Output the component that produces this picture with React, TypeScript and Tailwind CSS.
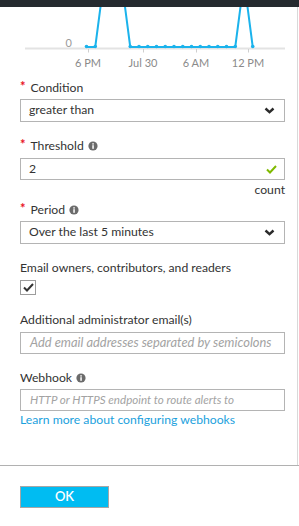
import React from "react";

const FONT = { fontFamily: '"Lato", "Open Sans", sans-serif' };

function Chevron() {
  return (
    <svg width="11" height="7" viewBox="0 0 11 7" className="shrink-0">
      <path d="M1.5 1.5 L5.5 5.2 L9.5 1.5" fill="none" stroke="#2b2b2b" strokeWidth="2.4" />
    </svg>
  );
}

function Info() {
  return (
    <svg width="10" height="10" viewBox="0 0 10 10" className="ml-[4px]">
      <circle cx="5" cy="5" r="4.6" fill="#6b6b6b" />
      <rect x="4.3" y="4.2" width="1.5" height="3.6" fill="#fff" />
      <rect x="4.3" y="2.2" width="1.5" height="1.4" fill="#fff" />
    </svg>
  );
}

function Req() {
  return <span className="text-[#e81123] text-[13px] font-bold mr-[5px] relative top-[-2px]">*</span>;
}

function Chart() {
  const base = 40;
  const high = -27;
  const pts: [number, number][] = [];
  for (let i = 0; i < 20; i++) {
    const x = 86.5 + 8.75 * i;
    const y = (i >= 2 && i <= 4) || i === 18 ? high : base;
    pts.push([x, y]);
  }
  const baseline = pts.filter((p) => p[1] === base);
  return (
    <svg width="297" height="70" viewBox="0 0 297 70" className="block">
      <line x1="25" y1="41.5" x2="285" y2="41.5" stroke="#e3e3e3" strokeWidth="2" />
      {[88, 143, 196, 248].map((x) => (
        <line key={x} x1={x + 0.5} y1="42" x2={x + 0.5} y2="45.5" stroke="#cfcfcf" strokeWidth="1" />
      ))}
      <polyline
        points={pts.map((p) => p.join(",")).join(" ")}
        fill="none"
        stroke="#1bb3ec"
        strokeWidth="2"
        strokeLinejoin="round"
      />
      {baseline.map(([x, y]) => (
        <circle key={x} cx={x} cy={y - 0.5} r="1.8" fill="#1bb3ec" />
      ))}
      <text x="72" y="40" textAnchor="end" fontSize="11" fill="#9a9a9a" style={FONT}>
        0
      </text>
      {[
        [88, "6 PM"],
        [143, "Jul 30"],
        [196, "6 AM"],
        [248, "12 PM"],
      ].map(([x, t]) => (
        <text key={t as string} x={x as number} y="60" textAnchor="middle" fontSize="11" fill="#8a8a8a" style={FONT}>
          {t}
        </text>
      ))}
    </svg>
  );
}

export default function App() {
  return (
    <div className="w-[299px] h-[526px] bg-white flex flex-col overflow-hidden text-[#333]" style={FONT}>
      <div className="h-[7px] bg-[#252a2f] shrink-0" />
      <div className="h-[459px] flex flex-row border-b border-[#b1b1b1] shrink-0">
        <div className="w-[297px] flex flex-col">
          <Chart />
          <div className="flex flex-col pl-[20px] pr-[12px] text-[12.2px]">
            <div className="mt-[2px] h-[18px] leading-[18px] flex items-center">
              <Req />
              <span>Condition</span>
            </div>
            <div className="mt-[2px] h-[23px] border border-[#b4b4b4] flex items-center justify-between pl-[8px] pr-[9px]">
              <span>greater than</span>
              <Chevron />
            </div>

            <div className="mt-[15px] h-[18px] leading-[18px] flex items-center">
              <Req />
              <span>Threshold</span>
              <Info />
            </div>
            <div className="mt-[3px] h-[22px] border border-[#b4b4b4] flex items-center justify-between pl-[8px] pr-[7px]">
              <span>2</span>
              <svg width="11" height="9" viewBox="0 0 11 9">
                <path d="M1 4.5 L4 7.5 L10 1" fill="none" stroke="#7fba00" strokeWidth="2" />
              </svg>
            </div>
            <div className="mt-[1px] h-[18px] leading-[18px] text-right">count</div>

            <div className="mt-[2px] h-[18px] leading-[18px] flex items-center">
              <Req />
              <span>Period</span>
              <Info />
            </div>
            <div className="mt-[2px] h-[23px] border border-[#b4b4b4] flex items-center justify-between pl-[8px] pr-[9px]">
              <span>Over the last 5 minutes</span>
              <Chevron />
            </div>

            <div className="mt-[15px] h-[18px] leading-[18px]">Email owners, contributors, and readers</div>
            <div className="mt-[3px] w-[16px] h-[15px] border border-[#9c9c9c] flex items-center justify-center">
              <svg width="11" height="9" viewBox="0 0 11 9">
                <path d="M1 4.5 L4 7.5 L10 1" fill="none" stroke="#333" strokeWidth="2" />
              </svg>
            </div>

            <div className="mt-[16px] h-[18px] leading-[18px]">Additional administrator email(s)</div>
            <div className="mt-[3px] h-[22px] border border-[#b4b4b4] flex items-center pl-[9px] italic text-[#a3a3a3] text-[12.9px] whitespace-nowrap overflow-hidden">
              Add email addresses separated by semicolons
            </div>

            <div className="mt-[15px] h-[18px] leading-[18px] flex items-center">
              <span>Webhook</span>
              <Info />
            </div>
            <div className="mt-[2px] h-[22px] border border-[#b4b4b4] flex items-center pl-[9px] italic text-[#a3a3a3] text-[11.6px] whitespace-nowrap overflow-hidden">
              HTTP or HTTPS endpoint to route alerts to
            </div>
            <div className="h-[18px] leading-[18px] text-[#1ba1dd]">Learn more about configuring webhooks</div>
          </div>
        </div>
        <div className="w-px bg-[#d9d9d9]" />
      </div>
      <div className="flex-1 pl-[20px] pt-[20px]">
        <div className="w-[89px] h-[22px] bg-[#00bcf2] border border-[#a6a6a6] flex items-center justify-center text-white text-[13px] font-semibold">
          OK
        </div>
      </div>
    </div>
  );
}
